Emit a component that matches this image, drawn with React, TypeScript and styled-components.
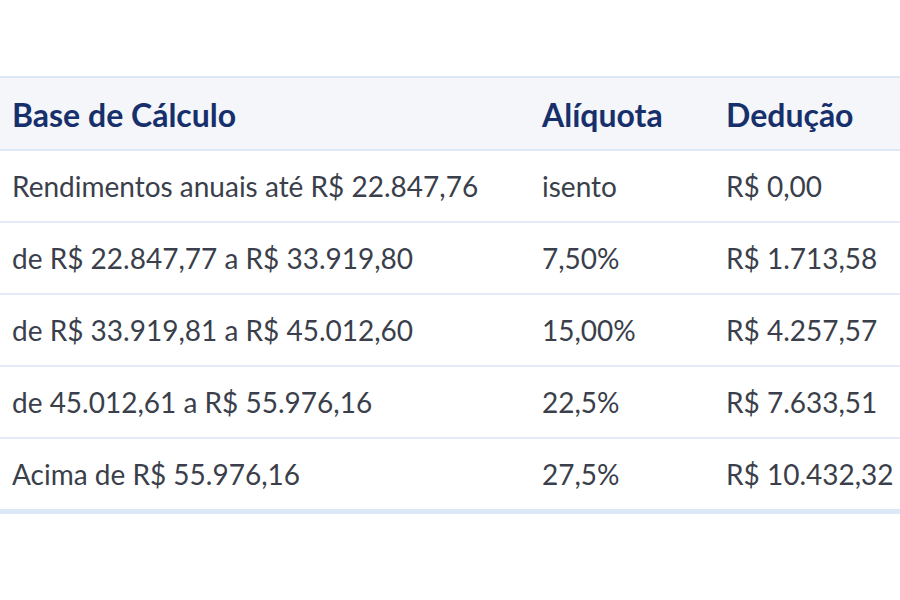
import React from 'react';
import styled, { createGlobalStyle } from 'styled-components';

const GlobalStyle = createGlobalStyle`
  body {
    margin: 0;
    background: #ffffff;
    font-family: Lato, "Open Sans", sans-serif;
  }
`;

const Page = styled.div`
  width: 900px;
  height: 600px;
  overflow: hidden;
  padding-top: 76px;
  box-sizing: border-box;
`;

const Table = styled.table`
  width: 100%;
  border-collapse: collapse;
  table-layout: fixed;
  border-top: 2px solid #dde8f6;
  border-bottom: 5px solid #dce8f8;
`;

const HeadCell = styled.th<{ $w?: number }>`
  width: ${p => (p.$w ? `${p.$w}px` : 'auto')};
  height: 69px;
  padding: 2px 12px 0;
  text-align: left;
  font-size: 32px;
  font-weight: 700;
  color: #17306b;
  background: #f4f6fa;
  border-bottom: 2px solid #dde8f6;
  white-space: nowrap;
`;

const Row = styled.tr`
  & + & td {
    border-top: 2px solid #e3ecf8;
  }
`;

const Cell = styled.td`
  height: 70px;
  padding: 0 12px;
  font-size: 28px;
  color: #3a3f4b;
  white-space: nowrap;
  vertical-align: middle;
`;

const rows = [
  ['Rendimentos anuais até R$ 22.847,76', 'isento', 'R$ 0,00'],
  ['de R$ 22.847,77 a R$ 33.919,80', '7,50%', 'R$ 1.713,58'],
  ['de R$ 33.919,81 a R$ 45.012,60', '15,00%', 'R$ 4.257,57'],
  ['de 45.012,61 a R$ 55.976,16', '22,5%', 'R$ 7.633,51'],
  ['Acima de R$ 55.976,16', '27,5%', 'R$ 10.432,32'],
];

function App() {
  return (
    <Page>
      <GlobalStyle />
      <Table>
        <thead>
          <tr>
            <HeadCell $w={506}>Base de Cálculo</HeadCell>
            <HeadCell $w={160}>Alíquota</HeadCell>
            <HeadCell>Dedução</HeadCell>
          </tr>
        </thead>
        <tbody>
          {rows.map(r => (
            <Row key={r[0]}>
              <Cell>{r[0]}</Cell>
              <Cell>{r[1]}</Cell>
              <Cell>{r[2]}</Cell>
            </Row>
          ))}
        </tbody>
      </Table>
    </Page>
  );
}

export default App;
